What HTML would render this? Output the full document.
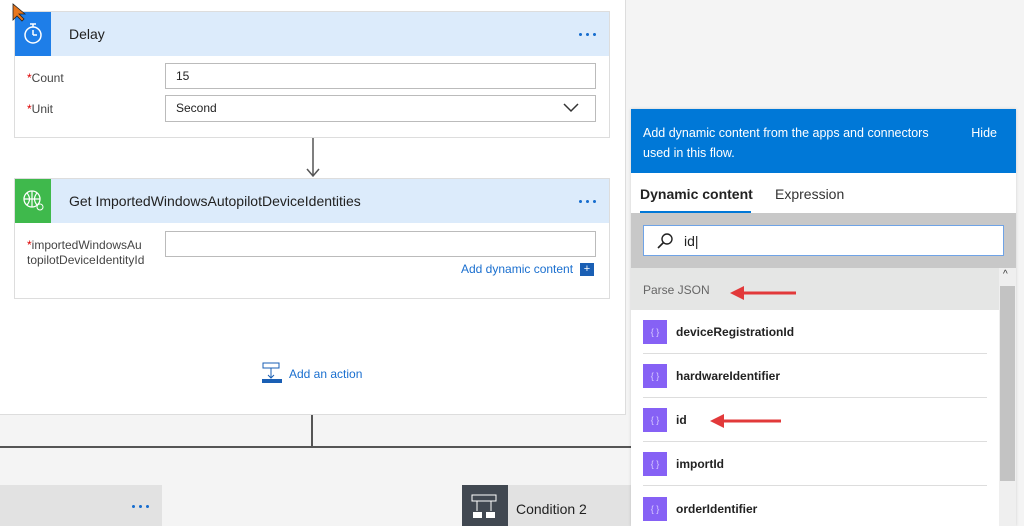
<!DOCTYPE html>
<html><head><style>
*{margin:0;padding:0;box-sizing:border-box}
html,body{width:1024px;height:526px;overflow:hidden}
body{background:#f4f4f4;font-family:"Liberation Sans",sans-serif;position:relative;color:#333}
.a{position:absolute}
.card{position:absolute;left:14px;width:596px;background:#fff;border:1px solid #ddd}
.hd{height:44px;background:#dcebfb;position:relative}
.ic{position:absolute;left:0;top:0;width:36px;height:44px}
.tt{position:absolute;left:54px;top:14px;font-size:14px;color:#222}
.dots{position:absolute;right:12px;top:21px;width:20px;height:3px;background:radial-gradient(circle,#1a6fcf 1.4px,transparent 1.6px) 0 0/7px 3px repeat-x}
.lb{position:absolute;left:12px;font-size:12px;color:#444}
.lb b{color:#d00;font-weight:normal}
.in{position:absolute;left:150px;width:431px;height:26px;border:1px solid #bbb;font-size:12px;padding:5px 10px;color:#222}
.it{position:absolute;left:643px;width:344px;height:44px;border-bottom:1px solid #ddd}
.it .q{position:absolute;left:0;top:10px;width:24px;height:24px;background:#8661f5;color:#d9ccff;font-size:9px;text-align:center;line-height:24px}
.it span{position:absolute;left:33px;top:15px;font-size:12px;font-weight:bold;color:#222}
</style></head><body>
<div class="a" style="left:0;top:0;width:626px;height:415px;background:#fff;border-bottom:1px solid #ddd;border-right:1px solid #ddd"></div>
<div class="card" style="top:11px;height:127px">
 <div class="hd"><div class="ic" style="background:#1e7ee8"><svg width="36" height="44"><circle cx="18" cy="23" r="8" fill="none" stroke="#fff" stroke-width="1.5"/><path d="M18 23V18M18 23h4M15 12h6M18 12v3" stroke="#fff" stroke-width="1.5" fill="none"/></svg></div><div class="tt">Delay</div><div class="dots"></div></div>
 <div class="lb" style="top:59px"><b>*</b>Count</div><div class="in" style="top:51px">15</div>
 <div class="lb" style="top:90px"><b>*</b>Unit</div><div class="in" style="top:83px;height:27px">Second<svg class="a" style="right:16px;top:7px" width="16" height="10"><path d="M1 1l7 7 7-7" stroke="#333" stroke-width="1.5" fill="none"/></svg></div>
</div>
<svg class="a" style="left:305px;top:138px" width="16" height="40"><path d="M8 0v38M2 31l6 7 6-7" stroke="#555" stroke-width="1.5" fill="none"/></svg>
<div class="card" style="top:178px;height:121px">
 <div class="hd"><div class="ic" style="background:#3fb94c"><svg width="36" height="44"><circle cx="17" cy="20" r="8" fill="none" stroke="#fff" stroke-width="1.3"/><path d="M9 20h16M17 12v16M12 14q5 6 0 12M22 14q-5 6 0 12" stroke="#fff" stroke-width="1.2" fill="none"/><circle cx="25" cy="28" r="3" fill="#3fb94c" stroke="#fff"/></svg></div><div class="tt">Get ImportedWindowsAutopilotDeviceIdentities</div><div class="dots"></div></div>
 <div class="lb" style="top:59px;line-height:15px"><b>*</b>importedWindowsAu<br>topilotDeviceIdentityId</div><div class="in" style="top:52px"></div>
 <div class="a" style="left:446px;top:83px;font-size:12px;color:#1a6fcf">Add dynamic content</div>
 <div class="a" style="left:565px;top:84px;width:14px;height:13px;background:#1a5fb4;color:#fff;font-size:11px;text-align:center;line-height:13px">+</div>
</div>
<svg class="a" style="left:262px;top:362px" width="22" height="22"><rect x="1" y="1" width="16" height="5" fill="none" stroke="#1a5fb4"/><path d="M9 6v10M6 13l3 3 3-3" stroke="#1a5fb4" fill="none"/><rect x="0" y="17" width="20" height="4" fill="#1a5fb4"/></svg>
<div class="a" style="left:289px;top:367px;font-size:12px;color:#1a6fcf">Add an action</div>
<div class="a" style="left:311px;top:415px;width:2px;height:32px;background:#555"></div>
<div class="a" style="left:0;top:446px;width:632px;height:2px;background:#555"></div>
<div class="a" style="left:0;top:485px;width:162px;height:41px;background:#e2e2e2"><div class="dots" style="right:12px;top:20px"></div></div>
<div class="a" style="left:462px;top:485px;width:170px;height:41px;background:#e2e2e2"></div>
<div class="a" style="left:462px;top:485px;width:46px;height:41px;background:#414851"><svg width="46" height="41"><rect x="10" y="10" width="24" height="6" fill="none" stroke="#fff"/><path d="M15 16v10M29 16v10" stroke="#fff"/><rect x="11" y="27" width="9" height="6" fill="#fff"/><rect x="24" y="27" width="9" height="6" fill="#fff"/></svg></div>
<div class="a" style="left:516px;top:501px;font-size:14px;color:#222">Condition 2</div>
<div class="a" style="left:631px;top:109px;width:385px;height:417px;background:#fff;box-shadow:0 0 3px rgba(0,0,0,.15)"></div>
<div class="a" style="left:631px;top:109px;width:385px;height:64px;background:#0078d7;color:#fff;font-size:12.5px;line-height:20px;padding:14px 12px"><div style="width:310px">Add dynamic content from the apps and connectors used in this flow.</div><div class="a" style="right:19px;top:14px">Hide</div></div>
<div class="a" style="left:640px;top:186px;font-size:14px;font-weight:bold;color:#222">Dynamic content</div>
<div class="a" style="left:640px;top:211px;width:111px;height:2px;background:#0078d7"></div>
<div class="a" style="left:775px;top:186px;font-size:14px;color:#333">Expression</div>
<div class="a" style="left:631px;top:213px;width:385px;height:55px;background:#c8c8c8"></div>
<div class="a" style="left:643px;top:225px;width:361px;height:31px;background:#fff;border:1px solid #6fa3e6"><svg class="a" style="left:12px;top:6px" width="18" height="18"><circle cx="11" cy="7" r="5" fill="none" stroke="#222" stroke-width="1.4"/><path d="M7.5 10.5L2 16" stroke="#222" stroke-width="1.6"/></svg><div class="a" style="left:40px;top:7px;font-size:14px;color:#222">id|</div></div>
<div class="a" style="left:631px;top:268px;width:368px;height:42px;background:#e5e6e5"></div>
<div class="a" style="left:643px;top:283px;font-size:12px;color:#666">Parse JSON</div>
<div class="a" style="left:999px;top:268px;width:17px;height:258px;background:#efefef"></div>
<div class="a" style="left:1000px;top:286px;width:15px;height:195px;background:#c3c3c3"></div>
<div class="a" style="left:1003px;top:269px;font-size:10px;color:#333">^</div>
<div class="it" style="top:310px"><div class="q">{ }</div><span>deviceRegistrationId</span></div>
<div class="it" style="top:354px"><div class="q">{ }</div><span>hardwareIdentifier</span></div>
<div class="it" style="top:398px"><div class="q">{ }</div><span>id</span></div>
<div class="it" style="top:442px"><div class="q">{ }</div><span>importId</span></div>
<div class="it" style="top:487px;border:0"><div class="q">{ }</div><span>orderIdentifier</span></div>
<svg class="a" style="left:728px;top:283px" width="70" height="18"><path d="M68 10H12" stroke="#e2393a" stroke-width="3"/><path d="M2 10l14-7v14z" fill="#e2393a"/></svg>
<svg class="a" style="left:708px;top:413px" width="75" height="18"><path d="M73 8H12" stroke="#e2393a" stroke-width="3"/><path d="M2 8l14-7v14z" fill="#e2393a"/></svg>
<svg class="a" style="left:12px;top:3px" width="14" height="20"><path d="M1 1v16l4-4 5 5 2-2-5-5h6z" fill="#e8761c" stroke="#222" stroke-width=".8"/></svg>
</body></html>
